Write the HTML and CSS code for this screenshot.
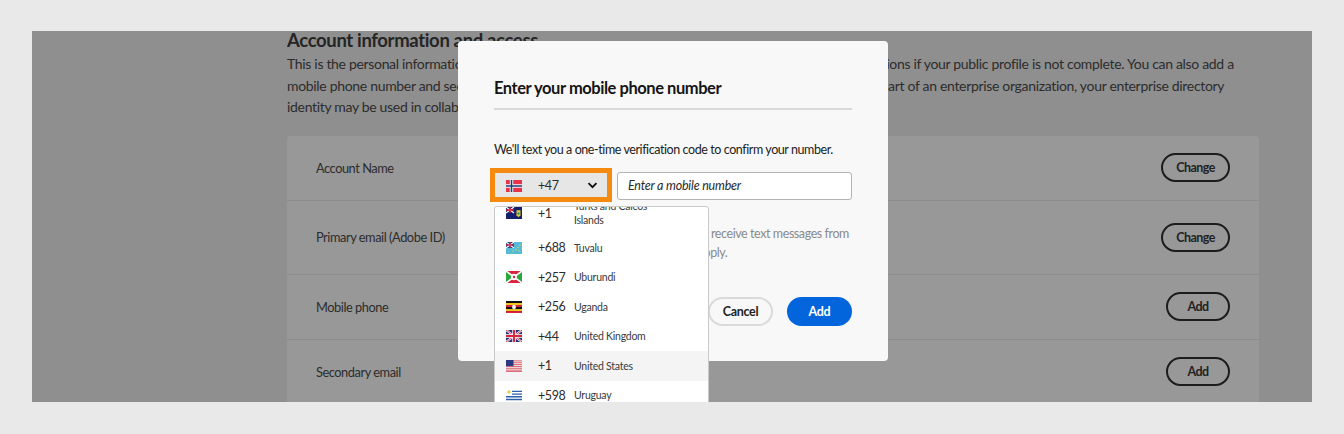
FILE: index.html
```html
<!DOCTYPE html>
<html lang="en">
<head>
<meta charset="utf-8">
<title>Enter your mobile phone number</title>
<link rel="stylesheet" href="styles.css">
</head>
<body>
<div class="frame">
  <main class="page">
    <h2 class="page-title">Account information and access</h2>
    <p class="page-intro">This is the personal information that you use to access Adobe apps and services. You may see fewer options if your public profile is not complete. You can also add a mobile phone number and secondary email to keep your account secure and recover access. If you are part of an enterprise organization, your enterprise directory identity may be used in collaboration with others.</p>
    <section class="card">
      <div class="row row-a"><span>Account Name</span><button class="ghost">Change</button></div>
      <div class="row row-b"><span>Primary email (Adobe ID)</span><button class="ghost">Change</button></div>
      <div class="row row-a"><span>Mobile phone</span><button class="ghost">Add</button></div>
      <div class="row row-a"><span>Secondary email</span><button class="ghost">Add</button></div>
    </section>
  </main>

  <div class="modal">
    <h3 class="modal-title">Enter your mobile phone number</h3>
    <p class="modal-text">We'll text you a one-time verification code to confirm your number.</p>
    <div class="phone">
      <div class="select">
        <svg class="flag" viewBox="0 0 16 11" preserveAspectRatio="none"><rect width="16" height="11" fill="#e8324a"/><path d="M0 5.5h16M5.5 0v11" stroke="#fff" stroke-width="3.4"/><path d="M0 5.5h16M5.5 0v11" stroke="#1f3a7a" stroke-width="1.6"/></svg>
        <span class="select-code">+47</span>
        <svg class="chev" viewBox="0 0 10 7"><path d="M1 1.2l4 4 4-4" fill="none" stroke="#111" stroke-width="1.9"/></svg>
      </div>
      <div class="input">Enter a mobile number</div>
    </div>
    <p class="note">By selecting Add, you confirm that you will receive text messages from Adobe. Message and data rates will also apply.</p>
    <div class="actions">
      <button class="btn btn-cancel">Cancel</button>
      <button class="btn btn-add">Add</button>
    </div>
  </div>

  <ul class="list">
    <li class="item item-first">
      <svg class="flag" viewBox="0 0 16 11" preserveAspectRatio="none"><rect width="16" height="11" fill="#14206b"/><path d="M0 0l8 5.5M8 0L0 5.5" stroke="#fff" stroke-width="1.2"/><path d="M4 0v5.5M0 2.7h8" stroke="#d8243c" stroke-width="1.4"/><path d="M10.5 3h4v4.5l-2 2-2-2z" fill="#e8c832"/><circle cx="12.5" cy="6" r="1.1" fill="#2f8f4e"/></svg>
      <span class="code">+1</span><span class="name">Turks and Caicos Islands</span>
    </li>
    <li class="item">
      <svg class="flag" viewBox="0 0 16 11" preserveAspectRatio="none"><rect width="16" height="11" fill="#55bcd8"/><rect width="8" height="5.5" fill="#1f4a8f"/><path d="M0 0l8 5.5M8 0L0 5.5" stroke="#fff" stroke-width="1"/><path d="M4 0v5.5M0 2.7h8" stroke="#d8243c" stroke-width="1.2"/><g fill="#e8d84a"><circle cx="10" cy="7" r=".7"/><circle cx="12" cy="5" r=".7"/><circle cx="14" cy="3" r=".7"/><circle cx="13" cy="8" r=".7"/><circle cx="7" cy="8.5" r=".7"/></g></svg>
      <span class="code">+688</span><span class="name">Tuvalu</span>
    </li>
    <li class="item">
      <svg class="flag" viewBox="0 0 16 11" preserveAspectRatio="none"><rect width="16" height="11" fill="#d8243c"/><path d="M0 0l8 5.5L0 11zM16 0L8 5.5 16 11z" fill="#2aa83e"/><path d="M0 0l16 11M16 0L0 11" stroke="#fff" stroke-width="1.5"/><circle cx="8" cy="5.5" r="3" fill="#fff"/><circle cx="8" cy="5.5" r="1.2" fill="#d8243c"/></svg>
      <span class="code">+257</span><span class="name">Uburundi</span>
    </li>
    <li class="item">
      <svg class="flag" viewBox="0 0 16 11" preserveAspectRatio="none"><rect width="16" height="11" fill="#111"/><rect y="1.85" width="16" height="1.85" fill="#f2c81e"/><rect y="3.7" width="16" height="1.85" fill="#d8243c"/><rect y="7.4" width="16" height="1.85" fill="#f2c81e"/><rect y="9.25" width="16" height="1.75" fill="#d8243c"/><circle cx="8" cy="5.5" r="2" fill="#eee"/></svg>
      <span class="code">+256</span><span class="name">Uganda</span>
    </li>
    <li class="item">
      <svg class="flag" viewBox="0 0 16 11" preserveAspectRatio="none"><rect width="16" height="11" fill="#26357f"/><path d="M0 0l16 11M16 0L0 11" stroke="#fff" stroke-width="2"/><path d="M0 0l16 11M16 0L0 11" stroke="#d8243c" stroke-width=".8"/><path d="M8 0v11M0 5.5h16" stroke="#fff" stroke-width="3.4"/><path d="M8 0v11M0 5.5h16" stroke="#d8243c" stroke-width="1.9"/></svg>
      <span class="code">+44</span><span class="name">United Kingdom</span>
    </li>
    <li class="item item-active">
      <svg class="flag" viewBox="0 0 16 11" preserveAspectRatio="none"><rect width="16" height="11" fill="#f5f0f0"/><path d="M0 .8h16M0 2.5h16M0 4.2h16M0 5.9h16M0 7.6h16M0 9.3h16M0 10.6h16" stroke="#d8505f" stroke-width=".85"/><rect width="7.5" height="5.6" fill="#2a3a80"/></svg>
      <span class="code">+1</span><span class="name">United States</span>
    </li>
    <li class="item">
      <svg class="flag" viewBox="0 0 16 11" preserveAspectRatio="none"><rect width="16" height="11" fill="#fff"/><path d="M0 1.2h16M0 3.7h16M0 6.1h16M0 8.6h16" stroke="#2c5fa8" stroke-width="1.2" transform="translate(0 1)"/><rect width="6" height="5.5" fill="#fff"/><circle cx="3" cy="2.8" r="1.6" fill="#eec643"/></svg>
      <span class="code">+598</span><span class="name">Uruguay</span>
    </li>
  </ul>
</div>
</body>
</html>
```
FILE: styles.css
```css
* { box-sizing: border-box; }
html, body { margin: 0; height: 100%; }
body {
  background: #e9e9e9;
  padding: 31px 32px 0;
  overflow: hidden;
  font-family: "Lato", "Open Sans", sans-serif;
  color: #2c2c2c;
}
button { font-family: inherit; }
.frame {
  position: relative;
  width: 1280px;
  height: 371px;
  background: #8f8f8f;
  overflow: hidden;
}
.page {
  width: 972px;
  margin-left: 255px;
}
.page-title {
  margin: 0;
  font-size: 18.5px;
  font-weight: 700;
  letter-spacing: -0.35px;
  line-height: 18px;
  color: #252525;
}
.page-intro {
  margin: 4px 0 0;
  font-size: 14px;
  letter-spacing: -0.32px;
  line-height: 21.5px;
  color: #2c2c2c;
}
.card {
  margin-top: 18px;
  background: #989898;
  border-radius: 4px 4px 0 0;
}
.row {
  display: flex;
  align-items: center;
  justify-content: space-between;
  padding: 0 29px;
  border-bottom: 1px solid #8d8d8d;
  font-size: 12.8px;
  letter-spacing: -0.45px;
  color: #2c2c2c;
}
.row-a { height: 65px; }
.row-b { height: 74px; }
.ghost {
  height: 29px;
  min-width: 64px;
  padding: 0 13px;
  border: 2px solid #1c1c1c;
  border-radius: 15px;
  background: transparent;
  font-size: 12.5px;
  font-weight: 700;
  letter-spacing: -0.5px;
  color: #222;
}
.modal {
  position: absolute;
  left: 426px;
  top: 10px;
  width: 430px;
  height: 320px;
  padding: 36px 36px 0;
  background: #f8f8f8;
  border-radius: 4px;
}
.modal-title {
  margin: 0;
  padding-bottom: 9px;
  font-size: 16.5px;
  font-weight: 700;
  letter-spacing: -0.45px;
  line-height: 22px;
  color: #151515;
  border-bottom: 2px solid #d9d9d9;
}
.modal-text {
  margin: 31px 0 0;
  font-size: 12.5px;
  letter-spacing: -0.42px;
  line-height: 18px;
  color: #222;
}
.phone {
  display: flex;
  align-items: center;
  gap: 5px;
  margin: 9px 0 0 -4px;
}
.select {
  display: flex;
  align-items: center;
  width: 122px;
  height: 34px;
  padding: 1px 9px 0 11px;
  background: #e6e6e6;
  border: 5px solid #f58a10;
  font-size: 12.5px;
  letter-spacing: -0.4px;
}
.select-code { margin-left: 16px; color: #2c2c2c; }
.chev { width: 11px; height: 7px; margin-left: auto; }
.input {
  flex: 1;
  height: 28px;
  margin-top: 2px;
  padding: 0 10px;
  background: #fff;
  border: 1px solid #b3b3b3;
  border-radius: 3px;
  font-size: 12.5px;
  font-style: italic;
  letter-spacing: -0.2px;
  line-height: 26px;
  color: #2a2a2a;
}
.note {
  margin: 22px 0 0;
  font-size: 12.5px;
  letter-spacing: -0.42px;
  line-height: 19px;
  color: #8a8a8a;
}
.actions {
  display: flex;
  justify-content: flex-end;
  gap: 14px;
  margin-top: 35px;
}
.btn {
  height: 29px;
  border-radius: 15px;
  font-size: 12.5px;
  font-weight: 700;
  letter-spacing: -0.3px;
}
.btn-cancel {
  width: 65px;
  background: transparent;
  border: 2px solid #dadada;
  color: #222;
}
.btn-add {
  width: 65px;
  background: #0265dc;
  border: 0;
  color: #fff;
}
.flag { flex: none; width: 16px; height: 12px; }
.list {
  position: absolute;
  left: 462px;
  top: 175px;
  width: 215px;
  height: 200px;
  margin: 0;
  padding: 0;
  list-style: none;
  background: #fff;
  border: 1px solid #c9c9c9;
  border-radius: 3px;
  overflow: hidden;
}
.item {
  display: flex;
  align-items: center;
  height: 29.5px;
  padding-left: 11px;
  font-size: 12.5px;
  letter-spacing: -0.4px;
}
.item-first {
  height: 40px;
  margin-top: -14px;
}
.item-active { background: #f4f4f4; }
.code { flex: none; width: 36px; margin-left: 16px; color: #2c2c2c; }
.name { font-size: 10.5px; letter-spacing: -0.25px; line-height: 14px; color: #3a3a3a; width: 82px; }
```
